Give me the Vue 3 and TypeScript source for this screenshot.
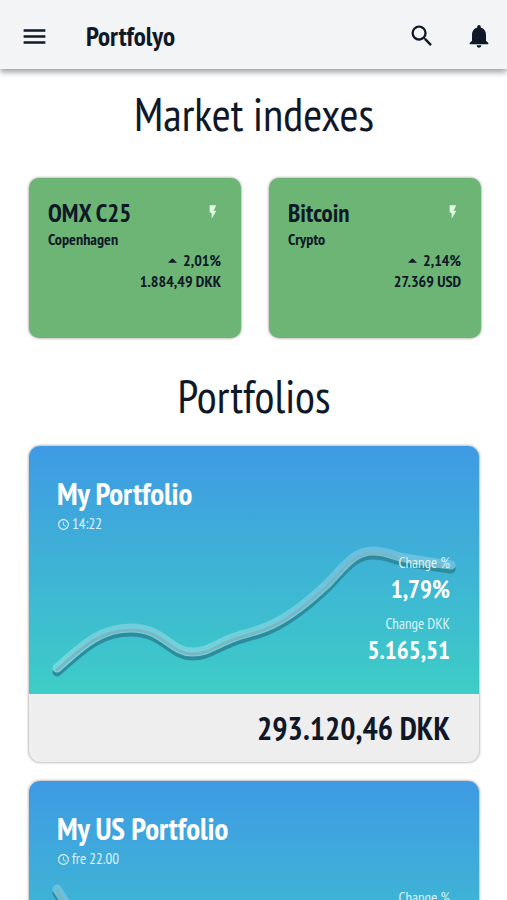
<script setup lang="ts">
interface MarketIndex {
  name: string
  kind: string
  change: string
  value: string
}

interface Portfolio {
  name: string
  time: string
  changePercent: string
  changeAmount: string
  total: string
  line: string
}

const indexes: MarketIndex[] = [
  { name: 'OMX C25', kind: 'Copenhagen', change: '2,01%', value: '1.884,49 DKK' },
  { name: 'Bitcoin', kind: 'Crypto', change: '2,14%', value: '27.369 USD' },
]

const portfolios: Portfolio[] = [
  {
    name: 'My Portfolio',
    time: '14:22',
    changePercent: '1,79%',
    changeAmount: '5.165,51',
    total: '293.120,46 DKK',
    line: 'M28 222 C52 201 70 182 102 182 C134 182 142 206 163 206 C180 206 186 198 206 191 C220 186 231 185 246 177 C264 168 280 155 298 138 C314 122 324 105 344 105 C358 105 364 110 376 112 C392 115 408 117 422 119',
  },
  {
    name: 'My US Portfolio',
    time: 'fre 22.00',
    changePercent: '',
    changeAmount: '',
    total: '',
    line: 'M28 108 C42 130 56 156 84 172 C130 196 180 150 230 150 C300 150 360 190 422 180',
  },
]
</script>

<template>
  <div class="app">
    <header class="bar">
      <button class="icon-button" type="button" aria-label="Menu">
        <svg viewBox="0 0 24 24" width="29" height="29"><path d="M3 18h18v-2H3v2zm0-5h18v-2H3v2zm0-7v2h18V6H3z" /></svg>
      </button>
      <h1 class="brand">Portfolyo</h1>
      <div class="actions">
        <button class="icon-button" type="button" aria-label="Search">
          <svg viewBox="0 0 24 24" width="28" height="28"><path d="M15.5 14h-.79l-.28-.27A6.47 6.47 0 0 0 16 9.5 6.5 6.5 0 1 0 9.5 16c1.61 0 3.09-.59 4.23-1.57l.27.28v.79l5 4.99L20.49 19l-4.99-5zm-6 0C7.01 14 5 11.99 5 9.5S7.01 5 9.5 5 14 7.01 14 9.5 11.99 14 9.5 14z" /></svg>
        </button>
        <button class="icon-button" type="button" aria-label="Notifications">
          <svg viewBox="0 0 24 24" width="28" height="28"><path d="M12 22c1.1 0 2-.9 2-2h-4c0 1.1.9 2 2 2zm6-6v-5c0-3.07-1.63-5.64-4.5-6.32V4c0-.83-.67-1.5-1.5-1.5s-1.5.67-1.5 1.5v.68C7.64 5.36 6 7.92 6 11v5l-2 2v1h16v-1l-2-2z" /></svg>
        </button>
      </div>
    </header>

    <main class="content">
      <h2 class="section-title">Market indexes</h2>
      <section class="indexes">
        <article v-for="item in indexes" :key="item.name" class="index-card">
          <div class="index-head">
            <h3 class="index-name">{{ item.name }}</h3>
            <svg class="bolt" viewBox="0 0 24 24" width="16" height="16"><path d="M7 2v11h3v9l7-12h-4l4-8z" /></svg>
          </div>
          <p class="index-kind">{{ item.kind }}</p>
          <p class="index-figure">
            <svg viewBox="0 0 10 5" width="9" height="5"><path d="M0 5L5 0l5 5z" /></svg>{{ item.change }}
          </p>
          <p class="index-figure">{{ item.value }}</p>
        </article>
      </section>

      <h2 class="section-title">Portfolios</h2>
      <section class="portfolios">
        <article v-for="item in portfolios" :key="item.name" class="portfolio-card">
          <div class="panel">
            <svg class="chart" viewBox="0 0 450 248" preserveAspectRatio="none" aria-hidden="true">
              <defs>
                <linearGradient id="line-tone" gradientUnits="userSpaceOnUse" x1="0" y1="100" x2="0" y2="222">
                  <stop offset="0" stop-color="#68bee0" />
                  <stop offset="1" stop-color="#74d6da" />
                </linearGradient>
              </defs>
              <g fill="none" stroke-linecap="round" stroke-linejoin="round">
                <path class="line-shade" :d="item.line" transform="translate(0 4)" />
                <path class="line-body" :d="item.line" stroke="url(#line-tone)" />
                <path class="line-core" :d="item.line" transform="translate(0 2)" />
              </g>
            </svg>
            <div class="panel-text">
              <h3 class="portfolio-name">{{ item.name }}</h3>
              <p class="time">
                <svg viewBox="0 0 24 24" width="13" height="13"><path d="M11.99 2C6.47 2 2 6.48 2 12s4.47 10 9.99 10C17.52 22 22 17.52 22 12S17.52 2 11.99 2zM12 20c-4.42 0-8-3.58-8-8s3.58-8 8-8 8 3.58 8 8-3.58 8-8 8zm.5-13H11v6l5.25 3.15.75-1.23-4.5-2.67z" /></svg>
                <span>{{ item.time }}</span>
              </p>
              <dl class="changes">
                <dt>Change %</dt>
                <dd>{{ item.changePercent }}</dd>
                <template v-if="item.changeAmount">
                  <dt>Change DKK</dt>
                  <dd>{{ item.changeAmount }}</dd>
                </template>
              </dl>
            </div>
          </div>
          <p v-if="item.total" class="total">{{ item.total }}</p>
        </article>
      </section>
    </main>
  </div>
</template>

<style>
body {
  margin: 0;
  background: #fff;
}

html,
body,
#app {
  height: 100%;
}
</style>

<style scoped>
.app {
  height: 100%;
  display: flex;
  flex-direction: column;
  overflow: hidden;
  color: #101828;
  font-family: 'PT Sans Narrow', 'Open Sans', sans-serif;
}

h1,
h2,
h3,
p,
dl,
dd {
  margin: 0;
}

svg {
  display: block;
  fill: currentColor;
}

.bar {
  position: relative;
  z-index: 1;
  flex: none;
  display: flex;
  align-items: center;
  box-sizing: border-box;
  height: 69px;
  padding: 3px 14px 0 20px;
  background: #f2f4f6;
  box-shadow: 0 3px 6px rgba(0, 0, 0, 0.4);
}

.icon-button {
  padding: 0;
  border: 0;
  background: none;
  color: inherit;
}

.brand {
  margin-left: 37px;
  font-size: 27px;
  line-height: 36px;
}

.actions {
  display: flex;
  gap: 29px;
  margin-left: auto;
}

.content {
  flex: 1;
  min-height: 0;
  overflow: hidden;
  padding: 0 28px 0 29px;
}

.section-title {
  padding: 28px 0 20px;
  font-size: 46px;
  font-weight: 400;
  line-height: 60px;
  text-align: center;
}

.section-title:first-child {
  padding: 15px 0 34px;
}

.indexes {
  display: grid;
  grid-template-columns: 1fr 1fr;
  gap: 28px;
  margin-right: -2px;
}

.index-card {
  box-sizing: border-box;
  min-height: 160px;
  padding: 19px 20px 0 19px;
  border-radius: 10px;
  background: #6cb575;
  box-shadow: 0 0 3px rgba(0, 0, 0, 0.5);
}

.index-head {
  display: flex;
  justify-content: space-between;
}

.bolt {
  margin-top: 7px;
  color: #e2f6e0;
}

.index-name {
  font-size: 25px;
  line-height: 32px;
}

.index-kind {
  font-size: 16px;
  font-weight: 700;
  line-height: 21px;
}

.index-figure {
  display: flex;
  justify-content: flex-end;
  align-items: center;
  gap: 6px;
  font-size: 16px;
  font-weight: 700;
  line-height: 21px;
}

.portfolios {
  display: flex;
  flex-direction: column;
  gap: 19px;
}

.portfolio-card {
  overflow: hidden;
  border-radius: 11px;
  background: #eee;
  box-shadow: 0 0 3px rgba(0, 0, 0, 0.5);
}

.panel {
  position: relative;
  min-height: 248px;
  background: linear-gradient(#3f9ae4, #3dcdc6);
  color: #fff;
}

.chart {
  position: absolute;
  inset: 0;
  width: 100%;
  height: 100%;
}

.line-shade {
  stroke: #2c8c9c;
  stroke-width: 9px;
}

.line-body {
  stroke-width: 9px;
}

.line-core {
  stroke: #78b8c6;
  stroke-width: 3px;
}

.panel-text {
  position: relative;
  padding: 28px 29px 0 28px;
}

.portfolio-name {
  font-size: 31px;
  line-height: 39px;
}

.time {
  display: flex;
  align-items: center;
  gap: 2px;
  color: #e0f2fa;
  font-size: 15px;
  line-height: 22px;
}

.changes {
  padding-top: 17px;
  text-align: right;
}

.changes dt {
  color: #d8f2f6;
  font-size: 15px;
  line-height: 21px;
}

.changes dd {
  padding-bottom: 8px;
  font-size: 25px;
  font-weight: 700;
  line-height: 32px;
}

.total {
  padding: 14px 29px;
  font-size: 32px;
  font-weight: 700;
  line-height: 40px;
  text-align: right;
}
</style>
